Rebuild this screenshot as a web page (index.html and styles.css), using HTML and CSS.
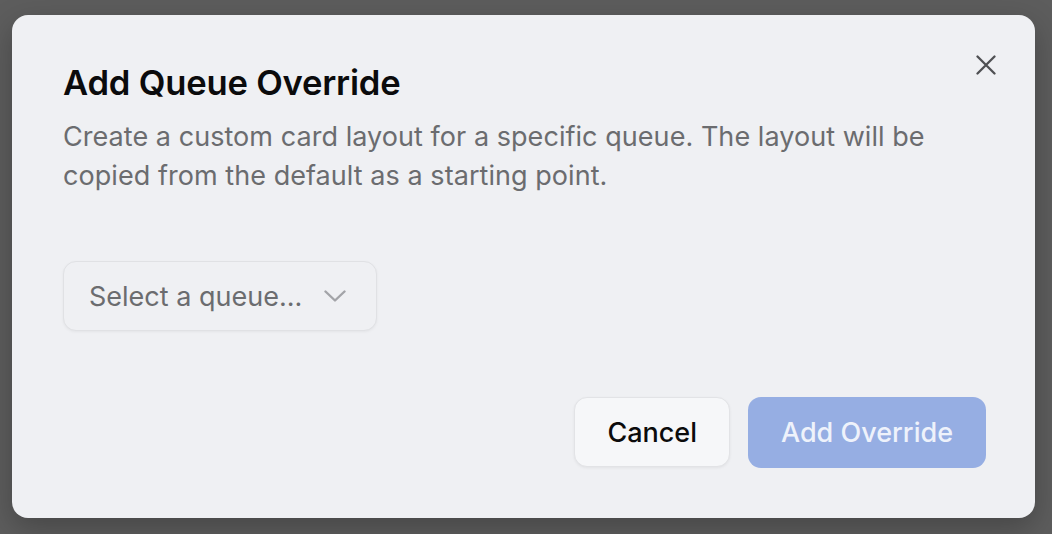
FILE: index.html
```html
<!DOCTYPE html>
<html lang="en">
<head>
<meta charset="utf-8">
<title>Add Queue Override</title>
<link rel="stylesheet" href="styles.css">
</head>
<body>
<div class="overlay">
  <div class="dialog" role="dialog" aria-labelledby="dlg-title">
    <button class="close" aria-label="Close">
      <svg width="20" height="20" viewBox="0 0 20 20" fill="none" stroke="#4f5053" stroke-width="2.3" stroke-linecap="round"><path d="M1.5 1.5 18.5 18.5M18.5 1.5 1.5 18.5"/></svg>
    </button>
    <h2 id="dlg-title" class="title">Add Queue Override</h2>
    <p class="desc">Create a custom card layout for a specific queue. The layout will be copied from the default as a starting point.</p>
    <div class="field">
      <button class="select">
        <span class="select-text">Select a queue...</span>
        <svg class="chev" width="22" height="12" viewBox="0 0 22 12" fill="none" stroke="#a3a4a8" stroke-width="2.4" stroke-linecap="round" stroke-linejoin="round"><path d="M1.5 1.5 11 10.5 20.5 1.5"/></svg>
      </button>
    </div>
    <div class="footer">
      <button class="btn btn-outline">Cancel</button>
      <button class="btn btn-primary" disabled>Add Override</button>
    </div>
  </div>
</div>
</body>
</html>
```
FILE: styles.css
```css
* { box-sizing: border-box; }
html, body { margin: 0; padding: 0; }
body {
  width: 1052px;
  height: 534px;
  background: #5d5d5d;
  font-family: Inter, "Noto Sans", sans-serif;
  overflow: hidden;
}
.overlay {
  padding: 15px 17px 16px 12px;
  height: 534px;
}
.dialog {
  position: relative;
  height: 503px;
  background: #eff0f3;
  border-radius: 16px;
  padding: 47px 49px 0 51px;
  box-shadow: 0 10px 30px rgba(0,0,0,0.25);
  display: flex;
  flex-direction: column;
}
.close {
  position: absolute;
  top: 40px;
  right: 39px;
  width: 20px;
  height: 20px;
  padding: 0;
  border: 0;
  background: none;
  display: flex;
}
.title {
  margin: 0;
  font-size: 34.6px;
  line-height: 40px;
  font-weight: 600;
  color: #0b0b0c;
  letter-spacing: -0.2px;
}
.desc {
  margin: 15px 0 0;
  font-size: 27px;
  line-height: 39px;
  color: #6b6c6f;
  max-width: 900px;
  letter-spacing: 0.05px;
}
.field {
  margin-top: 66px;
  display: flex;
}
.select {
  height: 70px;
  width: 314px;
  display: flex;
  align-items: center;
  justify-content: space-between;
  padding: 0 30px 0 25px;
  background: #eff0f3;
  border: 1.5px solid #e0e1e4;
  border-radius: 13px;
  box-shadow: 0 1px 3px rgba(0,0,0,0.05);
  font-family: inherit;
  font-size: 27px;
  color: #6b6c6f;
}
.chev { display: block; }
.footer {
  margin-top: 66px;
  display: flex;
  justify-content: flex-end;
  gap: 18px;
}
.btn {
  height: 70px;
  padding: 0 33px;
  border-radius: 13px;
  font-family: inherit;
  font-size: 27px;
  font-weight: 500;
}
.btn-outline {
  padding: 0 32px;
  background: #f6f7f9;
  border: 1.5px solid #e2e3e6;
  color: #0b0b0c;
  box-shadow: 0 1px 3px rgba(0,0,0,0.06);
}
.btn-primary {
  height: 71px;
  background: #96aee3;
  border: 0;
  color: #eef2fb;
  padding: 0 33px;
}
```
